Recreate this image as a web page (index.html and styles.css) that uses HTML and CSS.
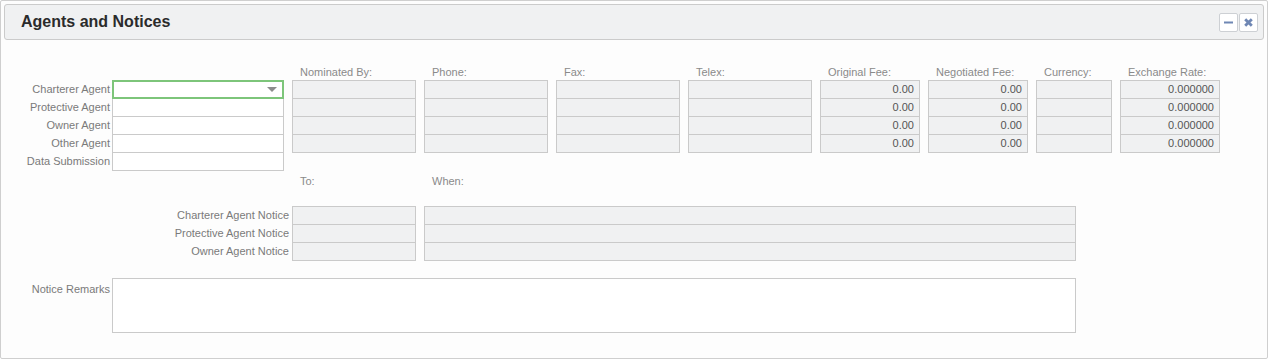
FILE: index.html
```html
<!DOCTYPE html>
<html>
<head>
<meta charset="UTF-8">
<title>Agents and Notices</title>
<link rel="stylesheet" href="styles.css">
</head>
<body>
<div class="panel">
    <div class="panel-head">
        <h2>Agents and Notices</h2>
        <div class="tools">
            <span class="tool"><svg width="9" height="9" viewBox="0 0 9 9"><rect x="0" y="3.5" width="9" height="2" fill="#6f87b4"/></svg></span>
            <span class="tool"><svg width="9" height="9" viewBox="0 0 9 9"><path d="M1.2 1.2L7.8 7.8M7.8 1.2L1.2 7.8" stroke="#6f87b4" stroke-width="2.8"/></svg></span>
        </div>
    </div>

    <div class="section agents">
        <div class="col labels">
            <div class="hd"></div>
            <div class="lbl">Charterer Agent</div>
            <div class="lbl">Protective Agent</div>
            <div class="lbl">Owner Agent</div>
            <div class="lbl">Other Agent</div>
            <div class="lbl">Data Submission</div>
        </div>
        <div class="col w172">
            <div class="hd"></div>
            <div class="cell edit focus"><span class="caret"></span></div>
            <div class="cell edit"></div>
            <div class="cell edit"></div>
            <div class="cell edit"></div>
            <div class="cell edit"></div>
        </div>
        <div class="col w124 gap">
            <div class="hd">Nominated By:</div>
            <div class="cell"></div><div class="cell"></div><div class="cell"></div><div class="cell"></div>
        </div>
        <div class="col w124 gap">
            <div class="hd">Phone:</div>
            <div class="cell"></div><div class="cell"></div><div class="cell"></div><div class="cell"></div>
        </div>
        <div class="col w124 gap">
            <div class="hd">Fax:</div>
            <div class="cell"></div><div class="cell"></div><div class="cell"></div><div class="cell"></div>
        </div>
        <div class="col w124 gap">
            <div class="hd">Telex:</div>
            <div class="cell"></div><div class="cell"></div><div class="cell"></div><div class="cell"></div>
        </div>
        <div class="col w100 gap">
            <div class="hd">Original Fee:</div>
            <div class="cell num">0.00</div><div class="cell num">0.00</div><div class="cell num">0.00</div><div class="cell num">0.00</div>
        </div>
        <div class="col w100 gap">
            <div class="hd">Negotiated Fee:</div>
            <div class="cell num">0.00</div><div class="cell num">0.00</div><div class="cell num">0.00</div><div class="cell num">0.00</div>
        </div>
        <div class="col w76 gap">
            <div class="hd">Currency:</div>
            <div class="cell"></div><div class="cell"></div><div class="cell"></div><div class="cell"></div>
        </div>
        <div class="col w100 gap">
            <div class="hd">Exchange Rate:</div>
            <div class="cell num">0.000000</div><div class="cell num">0.000000</div><div class="cell num">0.000000</div><div class="cell num">0.000000</div>
        </div>
    </div>

    <div class="section notices">
        <div class="col labels wide">
            <div class="hd tall"></div>
            <div class="lbl">Charterer Agent Notice</div>
            <div class="lbl">Protective Agent Notice</div>
            <div class="lbl">Owner Agent Notice</div>
        </div>
        <div class="col w124">
            <div class="hd tall">To:</div>
            <div class="cell"></div><div class="cell"></div><div class="cell"></div>
        </div>
        <div class="col w652 gap">
            <div class="hd tall">When:</div>
            <div class="cell"></div><div class="cell"></div><div class="cell"></div>
        </div>
    </div>

    <div class="section remarks">
        <div class="col labels">
            <div class="lbl top">Notice Remarks</div>
        </div>
        <div class="remarks-box"></div>
    </div>
</div>
</body>
</html>
```

FILE: styles.css
```css
html, body {
    margin: 0;
    background: #fff;
}
body {
    font-family: Arial, "Liberation Sans", sans-serif;
    font-size: 11px;
}
.panel {
    box-sizing: border-box;
    width: 1268px;
    height: 359px;
    border: 1px solid #cfcfcf;
    border-radius: 2px;
    padding: 3px 3px 0 0;
    background: #fdfdfd;
}
.panel-head {
    box-sizing: border-box;
    margin-left: 3px;
    height: 36px;
    background: #f0f1f2;
    border: 1px solid #cbcbcb;
    border-radius: 3px;
    display: flex;
    align-items: center;
    justify-content: space-between;
    padding: 0 5px 0 16px;
}
.panel-head h2 {
    margin: 0 0 1px;
    font-size: 16px;
    font-weight: bold;
    color: #2b2b2b;
}
.tools {
    display: flex;
    gap: 1px;
}
.tool {
    box-sizing: border-box;
    width: 19px;
    height: 19px;
    background: #fff;
    border: 1px solid #cdd0d4;
    border-radius: 2px;
    display: flex;
    align-items: center;
    justify-content: center;
}

.section {
    display: flex;
}
.agents {
    margin-top: 24px;
}
.notices {
    margin-top: 2px;
}
.remarks {
    margin-top: 17px;
}
.col {
    display: flex;
    flex-direction: column;
}
.gap { margin-left: 8px; }
.w172 { width: 172px; }
.w124 { width: 124px; }
.w100 { width: 100px; }
.w76 { width: 76px; }
.w652 { width: 652px; }

.labels {
    width: 109px;
    padding-right: 2px;
    text-align: right;
}
.labels.wide {
    width: 288px;
    padding-right: 3px;
}
.hd {
    height: 16px;
    line-height: 16px;
    padding-left: 8px;
    color: #8a8a8a;
    white-space: nowrap;
}
.hd.tall {
    height: 33px;
}
.lbl {
    height: 18px;
    line-height: 19px;
    color: #7a7a7a;
    white-space: nowrap;
}
.lbl.top {
    line-height: 16px;
    padding-top: 3px;
}
.cell {
    box-sizing: border-box;
    height: 19px;
    line-height: 17px;
    border: 1px solid #cacaca;
    background: #f0f1f2;
    color: #555;
    padding: 0 5px;
    position: relative;
}
.cell + .cell {
    margin-top: -1px;
}
.cell.num {
    text-align: right;
}
.cell.edit {
    background: #fff;
}
.cell.focus {
    border: 2px solid #7dc57a;
    z-index: 1;
}
.caret {
    position: absolute;
    right: 5px;
    top: 5px;
    border-left: 5px solid transparent;
    border-right: 5px solid transparent;
    border-top: 5px solid #8c8c8c;
}
.remarks-box {
    box-sizing: border-box;
    width: 964px;
    height: 55px;
    border: 1px solid #cacaca;
    background: #fff;
}
```
